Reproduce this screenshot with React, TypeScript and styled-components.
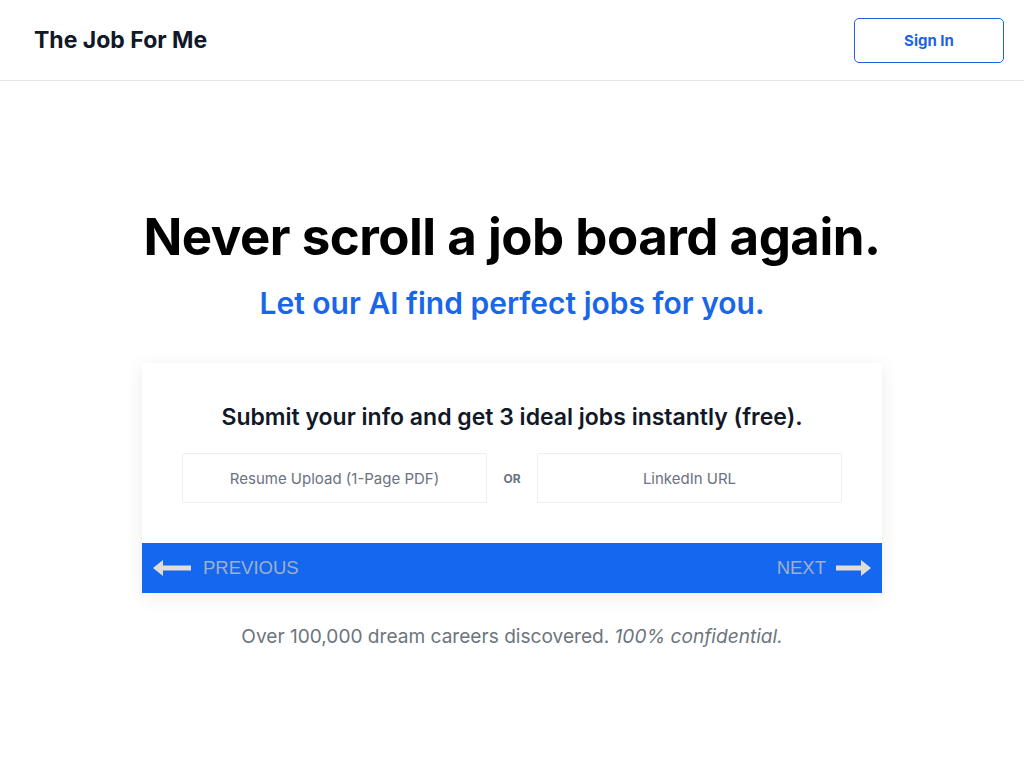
import React from "react";
import styled, { createGlobalStyle } from "styled-components";

const GlobalStyle = createGlobalStyle`
  * {
    box-sizing: border-box;
  }
  body {
    margin: 0;
    background: #ffffff;
    font-family: Inter, "Noto Sans", sans-serif;
  }
`;

const Header = styled.header`
  height: 81px;
  display: flex;
  align-items: center;
  justify-content: space-between;
  padding: 0 20px 0 34px;
  border-bottom: 1px solid #e5e7eb;
`;

const Logo = styled.div`
  font-size: 23px;
  font-weight: 700;
  color: #111827;
`;

const SignInButton = styled.button`
  width: 150px;
  height: 45px;
  border: 1px solid #1d63e0;
  border-radius: 5px;
  background: #ffffff;
  color: #1d63e0;
  font-family: Inter, sans-serif;
  font-size: 15px;
  font-weight: 700;
  cursor: pointer;
`;

const Main = styled.main`
  display: flex;
  flex-direction: column;
  align-items: center;
  padding-top: 124px;
`;

const Title = styled.h1`
  margin: 0;
  font-size: 51px;
  line-height: 64px;
  font-weight: 700;
  color: #000000;
  letter-spacing: -0.5px;
`;

const Subtitle = styled.h2`
  margin: 15px 0 0;
  font-size: 30px;
  line-height: 38px;
  font-weight: 600;
  color: #1a66e8;
`;

const Card = styled.section`
  margin-top: 41px;
  width: 740px;
  background: #ffffff;
  box-shadow: 0 4px 18px rgba(0, 0, 0, 0.08);
`;

const CardBody = styled.div`
  padding: 39px 40px 40px;
  display: flex;
  flex-direction: column;
  align-items: center;
`;

const CardTitle = styled.h3`
  margin: 0;
  font-size: 23px;
  line-height: 30px;
  font-weight: 600;
  color: #111827;
`;

const InputRow = styled.div`
  margin-top: 21px;
  width: 100%;
  display: grid;
  grid-template-columns: 1fr 50px 1fr;
  align-items: center;
`;

const Field = styled.input`
  height: 50px;
  width: 100%;
  border: 1px solid #eceef1;
  border-radius: 2px;
  background: #ffffff;
  text-align: center;
  font-family: Inter, sans-serif;
  font-size: 15px;
  color: #374151;
  outline: none;
  &::placeholder {
    color: #6b7280;
  }
`;

const Or = styled.span`
  text-align: center;
  font-size: 12px;
  font-weight: 700;
  color: #6b7280;
`;

const NavBar = styled.div`
  height: 50px;
  background: #1467ee;
  display: flex;
  align-items: center;
  justify-content: space-between;
  padding: 0 11px;
`;

const NavButton = styled.button<{ $gap: number }>`
  display: flex;
  align-items: center;
  gap: ${(p) => p.$gap}px;
  border: 0;
  background: transparent;
  padding: 0;
  color: #9fb0c8;
  font-family: "Liberation Sans", Arial, sans-serif;
  font-size: 18.5px;
  cursor: pointer;
`;

const Footnote = styled.p`
  margin: 29px 0 0;
  font-size: 19.1px;
  line-height: 28px;
  color: #6c757d;
  em {
    font-style: italic;
  }
`;

const Arrow = ({ dir, w }: { dir: "left" | "right"; w: number }) => (
  <svg width={w} height="16" viewBox={`0 0 ${w} 16`}>
    {dir === "left" ? (
      <path d={`M0 8 L10 0 L10 5.5 L${w} 5.5 L${w} 10.5 L10 10.5 L10 16 Z`} fill="#e2dcd6" />
    ) : (
      <path
        d={`M${w} 8 L${w - 10} 0 L${w - 10} 5.5 L0 5.5 L0 10.5 L${w - 10} 10.5 L${w - 10} 16 Z`}
        fill="#e2dcd6"
      />
    )}
  </svg>
);

export default function App() {
  return (
    <>
      <GlobalStyle />
      <Header>
        <Logo>The Job For Me</Logo>
        <SignInButton>Sign In</SignInButton>
      </Header>
      <Main>
        <Title>Never scroll a job board again.</Title>
        <Subtitle>Let our AI find perfect jobs for you.</Subtitle>
        <Card>
          <CardBody>
            <CardTitle>Submit your info and get 3 ideal jobs instantly (free).</CardTitle>
            <InputRow>
              <Field placeholder="Resume Upload (1-Page PDF)" readOnly />
              <Or>OR</Or>
              <Field placeholder="LinkedIn URL" />
            </InputRow>
          </CardBody>
          <NavBar>
            <NavButton $gap={12}>
              <Arrow dir="left" w={38} />
              PREVIOUS
            </NavButton>
            <NavButton $gap={10}>
              NEXT
              <Arrow dir="right" w={35} />
            </NavButton>
          </NavBar>
        </Card>
        <Footnote>
          Over 100,000 dream careers discovered. <em>100% confidential.</em>
        </Footnote>
      </Main>
    </>
  );
}
